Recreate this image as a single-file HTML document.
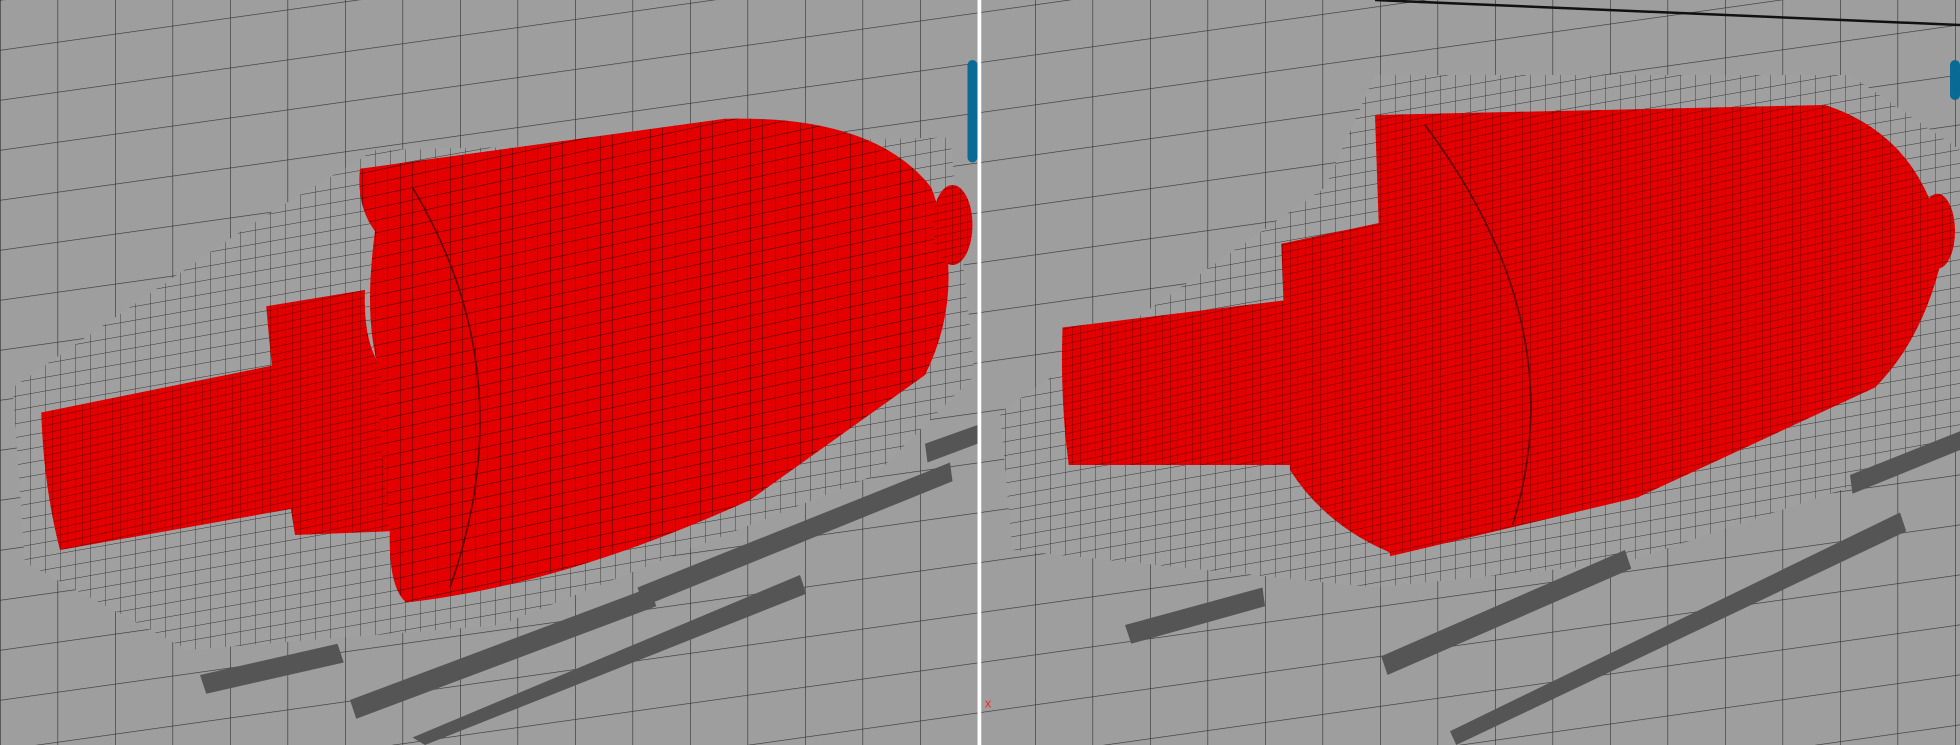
<!DOCTYPE html>
<html><head><style>html,body{margin:0;padding:0;background:#9e9e9e;overflow:hidden}svg{display:block}</style></head><body>
<svg width="1960" height="745" viewBox="0 0 1568 596" preserveAspectRatio="none" xmlns="http://www.w3.org/2000/svg">
<defs>
<pattern id="g" width="46" height="40" patternUnits="userSpaceOnUse" patternTransform="skewY(-8)"><rect width="46" height="40" fill="#9e9e9e"/><path d="M0 0H46M0 0V40" stroke="#333" stroke-width="1"/></pattern>
<pattern id="gs" width="12" height="11" patternUnits="userSpaceOnUse" patternTransform="skewY(-10)"><rect width="12" height="11" fill="#a0a0a0"/><path d="M0 0H12M0 0V11" stroke="#333" stroke-width=".7"/></pattern>
<pattern id="r" width="10" height="10" patternUnits="userSpaceOnUse" patternTransform="skewY(-12)"><rect width="10" height="10" fill="#e40000"/><path d="M0 0H10M0 0V10" stroke="#300" stroke-width=".7"/></pattern>
<pattern id="r2" width="6" height="6" patternUnits="userSpaceOnUse" patternTransform="skewY(-12)"><rect width="6" height="6" fill="#e20000"/><path d="M0 0H6M0 0V6" stroke="#400" stroke-width=".5"/></pattern>
</defs>
<rect width="1568" height="596" fill="url(#g)"/>
<!-- left panel -->
<polygon points="10,310 200,180 300,120 760,110 780,300 700,380 400,500 150,520 20,450" fill="url(#gs)"/>
<g fill="#555">
<polygon points="160,540 270,515 275,530 165,555"/><polygon points="280,560 520,470 525,485 285,575"/><polygon points="330,590 640,460 645,475 340,596"/><polygon points="510,470 760,370 762,385 515,485"/><polygon points="740,355 782,340 782,355 742,370"/>
</g>
<path d="M33,330 L230,290 L245,405 L48,440 Q35,390 33,330Z" fill="url(#r2)"/>
<path d="M213,245 L292,232 Q290,280 310,300 L312,425 L236,428 Q220,330 213,245Z" fill="url(#r2)"/>
<path d="M288,135 L580,95 Q700,92 745,150 Q775,230 740,300 L600,400 Q450,468 325,482 Q310,470 312,420 Q300,320 305,300 Q290,260 300,185 Q285,165 288,135Z" fill="url(#r)"/>
<path d="M330,150 Q420,300 360,470" fill="none" stroke="#500" stroke-width="1.2"/>
<ellipse cx="762" cy="180" rx="16" ry="32" fill="url(#r2)"/>
<rect x="774" y="48" width="8" height="82" rx="4" fill="#0a6a96"/>
<rect x="782" y="0" width="3" height="596" fill="#fff"/>
<!-- right panel -->
<polygon points="800,330 1060,150 1100,60 1480,60 1568,120 1568,360 1300,450 1100,470 810,440" fill="url(#gs)"/>
<g fill="#555">
<polygon points="1105,525 1300,440 1305,455 1110,540"/><polygon points="1160,585 1520,410 1525,425 1165,596"/><polygon points="900,500 1010,470 1012,485 905,515"/><polygon points="1480,380 1568,345 1568,360 1482,395"/>
</g>
<path d="M850,262 L1030,240 L1040,372 L855,372 Q848,320 850,262Z" fill="url(#r2)"/>
<path d="M1025,195 L1105,178 L1112,442 Q1060,420 1032,376 Z" fill="url(#r2)"/>
<path d="M1100,92 L1460,84 Q1540,110 1555,200 Q1540,270 1500,310 L1310,398 L1112,445 Z" fill="url(#r2)"/>
<path d="M1140,100 Q1260,260 1210,420" fill="none" stroke="#500" stroke-width="1.2"/>
<ellipse cx="1550" cy="185" rx="14" ry="30" fill="url(#r2)"/>
<line x1="1100" y1="0" x2="1568" y2="20" stroke="#111" stroke-width="2"/>
<rect x="1560" y="48" width="8" height="32" rx="4" fill="#0a6a96"/>
<text x="788" y="566" font-family="Liberation Sans,sans-serif" font-size="10" fill="#f22">x</text>
</svg>
</body></html>
